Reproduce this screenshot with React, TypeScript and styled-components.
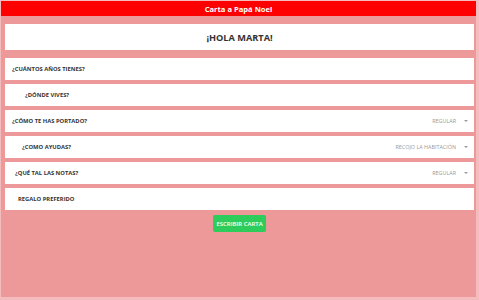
import React from 'react'
import styled, { createGlobalStyle } from 'styled-components'

const GlobalStyle = createGlobalStyle`
	html, body {
		margin: 0;
		padding: 0;
		background: #f4bcbc;
	}
	body {
		font-family: 'Open Sans', 'Noto Sans', sans-serif;
	}
`

const questions = [
	{ label: '¿CUÁNTOS AÑOS TIENES?', indent: 12 },
	{ label: '¿DÓNDE VIVES?', indent: 25 },
	{ label: '¿CÓMO TE HAS PORTADO?', indent: 12, value: 'REGULAR' },
	{ label: '¿COMO AYUDAS?', indent: 22, value: 'RECOJO LA HABITACIÓN' },
	{ label: '¿QUÉ TAL LAS NOTAS?', indent: 15, value: 'REGULAR' },
	{ label: 'REGALO PREFERIDO', indent: 18 },
]

const App = () => {
	return (
		<>
			<GlobalStyle />
			<Page>
				<TopBar>Carta a Papá Noel</TopBar>
				<Content>
					<Greeting>¡HOLA MARTA!</Greeting>
					<List>
						{questions.map((item, index) => (
							<Row key={index}>
								<Label indent={item.indent}>{item.label}</Label>
								{item.value && (
									<Select>
										<SelectValue>{item.value}</SelectValue>
										<Caret />
									</Select>
								)}
							</Row>
						))}
					</List>
					<ButtonWrap>
						<Button>ESCRIBIR CARTA</Button>
					</ButtonWrap>
				</Content>
			</Page>
		</>
	)
}

const Page = styled.div`
	width: 475px;
	height: 296px;
	margin-top: 1px;
	background: #ee9999;
	border-left: 1px solid #f4bcbc;
	display: flex;
	flex-direction: column;
`

const TopBar = styled.div`
	height: 15px;
	background: #ff0000;
	color: #ffffff;
	font-size: 7.6px;
	font-weight: 700;
	display: flex;
	align-items: center;
	justify-content: center;
`

const Content = styled.div`
	padding: 8px 0 0 4px;
	width: 469px;
	display: flex;
	flex-direction: column;
`

const Greeting = styled.div`
	height: 26px;
	background: #ffffff;
	color: #333333;
	font-size: 9.2px;
	font-weight: 700;
	display: flex;
	align-items: center;
	justify-content: center;
	margin-bottom: 8px;
`

const List = styled.div`
	display: flex;
	flex-direction: column;
	gap: 4px;
`

const Row = styled.div`
	height: 22px;
	background: #ffffff;
	display: flex;
	align-items: center;
	justify-content: space-between;
`

const Label = styled.span<{ indent: number }>`
	padding-left: ${({ indent }) => indent - 5}px;
	color: #333333;
	font-size: 5.8px;
	font-weight: 700;
`

const Select = styled.div`
	display: flex;
	align-items: center;
	gap: 8px;
	padding-right: 6px;
`

const SelectValue = styled.span`
	color: #999999;
	font-size: 5.4px;
`

const Caret = styled.span`
	width: 0;
	height: 0;
	border-left: 2px solid transparent;
	border-right: 2px solid transparent;
	border-top: 2px solid #999999;
`

const ButtonWrap = styled.div`
	display: flex;
	justify-content: center;
	padding-top: 5px;
`

const Button = styled.button`
	width: 53px;
	height: 17px;
	padding: 0;
	border: none;
	border-radius: 2px;
	background: #2ecc5a;
	color: #ffffff;
	font-family: 'Open Sans', 'Noto Sans', sans-serif;
	font-size: 6px;
	font-weight: 600;
`

export default App
